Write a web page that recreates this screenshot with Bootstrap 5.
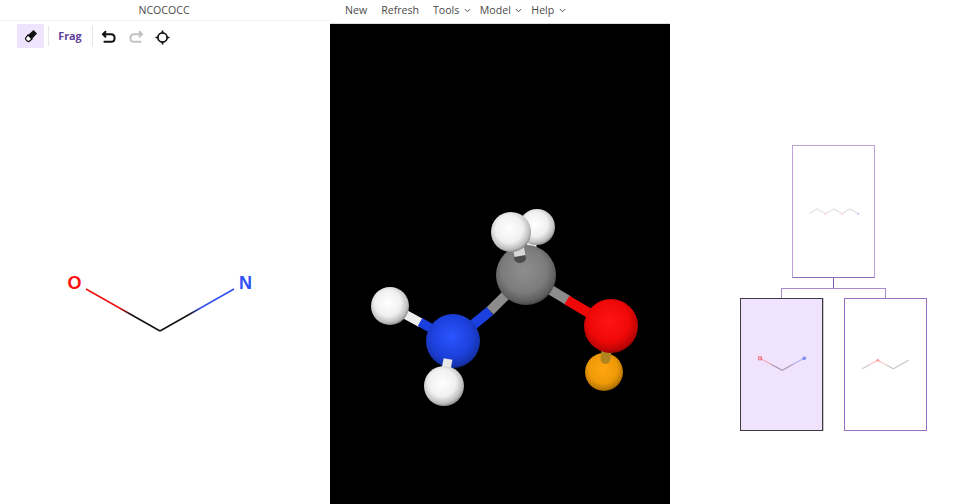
<!doctype html>
<html lang="en"><head><meta charset="utf-8"><title>NCOCOCC</title>
<link href="https://cdn.jsdelivr.net/npm/bootstrap@5.3.0/dist/css/bootstrap.min.css" rel="stylesheet">
<style>
html,body{height:504px;overflow:hidden}
body{font-family:"Open Sans","Liberation Sans",sans-serif;font-size:10.6px;color:#444;background:#fff}
.appwrap{width:977px;height:504px}
.leftpane{width:330px}
.centerpane{width:340px}
.rightpane{width:307px;padding-left:20px;padding-top:145px}
.titlebar{height:21px;line-height:20px;padding-right:2px;border-bottom:1px solid #f6f0fd;color:#4a4a4a}
.toolstrip{height:27px;padding:3px 0 0 17px}
.toolbtn{width:27px;height:24px}
.toolbtn-on{background:#efe3fd}
.tooldiv{width:1px;height:20px;background:#e6e6e6}
.div-a{margin:0 0 0 4px}
.fragbtn{font-size:10.8px;font-weight:700;color:#5e409c;width:43px;text-align:center;line-height:24px;padding-right:1px}
.iconbtn{width:26.500px;height:24px;padding-top:2px}
.firsticon{margin-left:3px}
.molview{flex:1 1 auto;min-height:0}
.menubar{height:24px;padding-left:15px;line-height:20px;color:#4a4a4a;border-bottom:1px solid #ddd}
.menuitem{margin-right:14px}
.menudrop{margin-right:9px}
.menuchev{margin-left:4.500px;vertical-align:1px}
.stage{flex:1 1 auto;min-height:0;background:#000}
.treenode{width:83px;height:133px;border:1px solid #966fc2;background:#fff;flex:none}
.treenode-root{border-color:#b9a3d6;border-bottom-color:#8c6bbd}
.treenode-sel{border-color:#3d3a44;background:#efe3fd;box-shadow:1px 0 0 #c9c9c9}
.treegap{width:21px;flex:none}
.linkv{width:1px;height:10px;background:#7c5aae}
.linkh{width:105px;height:10px;border:1px solid #a68ccc;border-bottom:0}
svg{display:block}
</style></head>
<body>
<div class="appwrap d-flex">
  <div class="leftpane d-flex flex-column">
    <div class="titlebar text-center">NCOCOCC</div>
    <div class="toolstrip d-flex align-items-center">
      <div class="toolbtn toolbtn-on d-flex align-items-center justify-content-center">
        <svg width="16" height="16" viewBox="0 0 16 16"><path d="M10.500 2 14 5.500 7.200 13c-.8.8-2.200.9-3 .1L3 11.900c-.9-.9-.9-2.100 0-3Z" fill="#111"/><path d="M5 7 9 11 6.600 13c-.7.6-1.800.6-2.500-.1L3.100 11.900c-.7-.7-.7-1.800 0-2.600Z" fill="#fff" stroke="#111" stroke-width="1.200"/></svg>
      </div>
      <div class="tooldiv div-a"></div>
      <div class="fragbtn">Frag</div>
      <div class="tooldiv"></div>
      <div class="iconbtn firsticon d-flex align-items-center justify-content-center">
        <svg width="16" height="14" viewBox="0 0 16 14"><path d="M5 1.200 2 4.200l3 3M2.200 4.200H10c2.300 0 3.600 1.500 3.600 3.700S12.300 11.800 10 11.800H2.600" fill="none" stroke="#111" stroke-width="2"/></svg>
      </div>
      <div class="iconbtn d-flex align-items-center justify-content-center">
        <svg width="16" height="14" viewBox="0 0 16 14"><path d="M11 1.200l3 3-3 3M13.800 4.200H6C3.700 4.200 2.400 5.700 2.400 7.900S3.700 11.800 6 11.800h7.400" fill="none" stroke="#c2c2c2" stroke-width="2"/></svg>
      </div>
      <div class="iconbtn d-flex align-items-center justify-content-center">
        <svg width="15" height="15" viewBox="0 0 15 15"><circle cx="7.500" cy="7.500" r="4.600" fill="none" stroke="#111" stroke-width="1.700"/><path d="M7.500 .5v3M7.500 11.500v3M.5 7.500h3M11.500 7.500h3" stroke="#111" stroke-width="1.700"/></svg>
      </div>
    </div>
    <div class="molview">
      <svg width="330" height="456" viewBox="0 48 330 456">
        <defs>
          <linearGradient id="lo" gradientUnits="userSpaceOnUse" x1="86" y1="289" x2="160" y2="331"><stop offset=".45" stop-color="#f01010"/><stop offset=".6" stop-color="#111"/></linearGradient>
          <linearGradient id="ln" gradientUnits="userSpaceOnUse" x1="234" y1="289" x2="160" y2="331"><stop offset=".45" stop-color="#3050f0"/><stop offset=".6" stop-color="#111"/></linearGradient>
        </defs>
        <path d="M86 289 160 331" stroke="url(#lo)" stroke-width="1.500" fill="none"/>
        <path d="M160 331 234 289" stroke="url(#ln)" stroke-width="1.500" fill="none"/>
        <text x="74.500" y="289" text-anchor="middle" font-family="Liberation Sans" font-weight="700" font-size="18" fill="#ff1010">O</text>
        <text x="245.500" y="289" text-anchor="middle" font-family="Liberation Sans" font-weight="700" font-size="18" fill="#3050f8">N</text>
      </svg>
    </div>
  </div>
  <div class="centerpane d-flex flex-column">
    <div class="menubar d-flex">
      <span class="menuitem">New</span>
      <span class="menuitem">Refresh</span>
      <span class="menudrop">Tools<svg class="menuchev d-inline" width="7" height="5" viewBox="0 0 7 5"><path d="M.8 1 3.500 3.800 6.200 1" fill="none" stroke="#555"/></svg></span>
      <span class="menudrop">Model<svg class="menuchev d-inline" width="7" height="5" viewBox="0 0 7 5"><path d="M.8 1 3.500 3.800 6.200 1" fill="none" stroke="#555"/></svg></span>
      <span class="menudrop">Help<svg class="menuchev d-inline" width="7" height="5" viewBox="0 0 7 5"><path d="M.8 1 3.500 3.800 6.200 1" fill="none" stroke="#555"/></svg></span>
    </div>
    <div class="stage">
      <svg width="340" height="480" viewBox="330 24 340 480">
        <defs>
          <radialGradient id="gw" cx=".45" cy=".42" r=".62"><stop offset="0" stop-color="#fff"/><stop offset=".55" stop-color="#f0f0f0"/><stop offset=".82" stop-color="#c0c0c0"/><stop offset="1" stop-color="#777"/></radialGradient>
          <radialGradient id="gc" cx=".47" cy=".42" r=".62"><stop offset="0" stop-color="#8e8e8e"/><stop offset=".6" stop-color="#7c7c7c"/><stop offset=".86" stop-color="#5c5c5c"/><stop offset="1" stop-color="#333"/></radialGradient>
          <radialGradient id="gn" cx=".47" cy=".42" r=".62"><stop offset="0" stop-color="#2a55ff"/><stop offset=".6" stop-color="#1c40dc"/><stop offset=".86" stop-color="#1634b0"/><stop offset="1" stop-color="#0c2070"/></radialGradient>
          <radialGradient id="go" cx=".47" cy=".42" r=".62"><stop offset="0" stop-color="#ff1414"/><stop offset=".6" stop-color="#f00808"/><stop offset=".86" stop-color="#bc0505"/><stop offset="1" stop-color="#700303"/></radialGradient>
          <radialGradient id="gs" cx=".47" cy=".42" r=".62"><stop offset="0" stop-color="#ffa50f"/><stop offset=".6" stop-color="#f09a08"/><stop offset=".86" stop-color="#bc7a05"/><stop offset="1" stop-color="#704a03"/></radialGradient>
        </defs>
        <path d="M532 240 530 262" stroke="#e6e6e6" stroke-width="10"/>
        <circle cx="537" cy="227" r="18" fill="url(#gw)"/>
        <path d="M526 275 490 311" stroke="#8c8c8c" stroke-width="10"/>
        <path d="M490 311 453 341" stroke="#1c40e0" stroke-width="10"/>
        <path d="M526 275 569 301" stroke="#8c8c8c" stroke-width="10"/>
        <path d="M567 300 611 326" stroke="#f00808" stroke-width="10"/>
        <path d="M390 306 421 323" stroke="#eee" stroke-width="9"/>
        <path d="M420 322 453 341" stroke="#1c40e0" stroke-width="9"/>
        <circle cx="604" cy="372" r="19" fill="url(#gs)"/>
        <path d="M607 345 605.500 359" stroke="#b08620" stroke-width="10" stroke-linecap="round"/>
        <circle cx="611" cy="326" r="27" fill="url(#go)"/>
        <circle cx="453" cy="341" r="27" fill="url(#gn)"/>
        <path d="M448 359 445 375" stroke="#e8e8e8" stroke-width="9"/>
        <circle cx="444" cy="386" r="20" fill="url(#gw)"/>
        <circle cx="390" cy="306" r="19" fill="url(#gw)"/>
        <circle cx="526" cy="275" r="30" fill="url(#gc)"/>
        <ellipse cx="520" cy="258" rx="6" ry="5" fill="#4c4c4c"/>
        <path d="M520 256 517 240" stroke="#d8d8d8" stroke-width="11"/>
        <circle cx="511" cy="232" r="20" fill="url(#gw)"/>
      </svg>
    </div>
  </div>
  <div class="rightpane d-flex flex-column align-items-center">
    <div class="treenode treenode-root">
      <svg width="81" height="131" viewBox="793 146 81 131"><path d="M809 213.700 817 209 825.700 213.700 834 209 842 213.700 850 209 858.300 213.700" fill="none" stroke="#e6dfdf" stroke-width="1.100"/><circle cx="825.700" cy="213.700" r="1" fill="#ffcccc"/><circle cx="842" cy="213.700" r="1" fill="#ffcccc"/><circle cx="858.300" cy="213.700" r="1" fill="#b6c2ff"/></svg>
    </div>
    <div class="linkv"></div>
    <div class="linkh"></div>
    <div class="d-flex">
      <div class="treenode treenode-sel">
        <svg width="81" height="131" viewBox="741 299 81 131"><path d="M760 358.300 771 364.300" stroke="#f4a8b4" stroke-width="1.200" fill="none"/><path d="M771 364.300 782.300 370.300 793 364.300" stroke="#a898aa" stroke-width="1.200" fill="none"/><path d="M793 364.300 804.300 358.300" stroke="#b0b0f0" stroke-width="1.200" fill="none"/><circle cx="760" cy="358.300" r="1.700" fill="none" stroke="#f87080" stroke-width="1.200"/><circle cx="804.300" cy="358.300" r="1.800" fill="#7a8cf0"/></svg>
      </div>
      <div class="treegap"></div>
      <div class="treenode">
        <svg width="81" height="131" viewBox="845 299 81 131"><path d="M862.300 368.700 870 364.500" stroke="#cfc8c8" stroke-width="1.200" fill="none"/><path d="M870 364.500 877.700 360.300 885.500 364.500" stroke="#fcc4c4" stroke-width="1.200" fill="none"/><path d="M885.500 364.500 893.300 368.700 908.700 360.300" stroke="#cac6c6" stroke-width="1.200" fill="none"/><circle cx="877.700" cy="360.300" r="1.500" fill="#ffa4a4"/></svg>
      </div>
    </div>
  </div>
</div>
</body></html>
